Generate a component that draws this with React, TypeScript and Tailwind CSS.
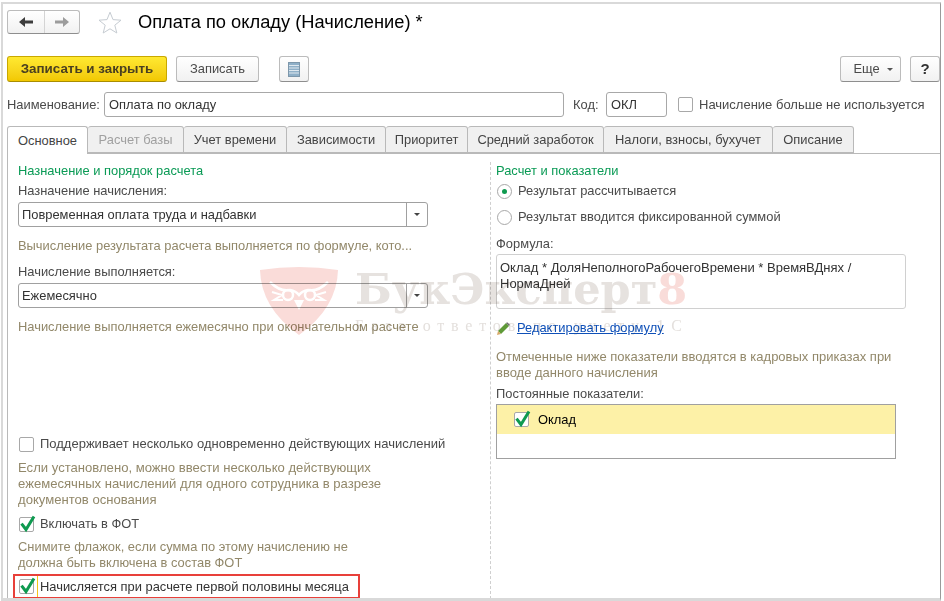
const font = { fontFamily: '"Liberation Sans", Arial, sans-serif' }

function Check({ checked = false }: { checked?: boolean }) {
  return (
    <span className="relative block w-[15px] h-[15px] shrink-0 rounded-[2px] border border-[#a8a8a8] bg-white">
      {checked && (
        <svg className="absolute left-[0px] top-[-3px] overflow-visible" width="15" height="17" viewBox="0 0 15 17">
          <path d="M1.5 8.6 L6 14.5 L14 1.5" fill="none" stroke="#0f9a50" strokeWidth="3" />
        </svg>
      )}
    </span>
  )
}

function Radio({ checked = false }: { checked?: boolean }) {
  return (
    <span className="flex items-center justify-center w-[15px] h-[15px] shrink-0 rounded-full border border-[#a8a8a8] bg-white">
      {checked && <span className="block w-[5px] h-[5px] rounded-full bg-[#0f9a50]" />}
    </span>
  )
}

function Btn({ children, className }: { children: React.ReactNode; className: string }) {
  return (
    <div className={"flex items-center justify-center h-[26px] rounded-[3px] border border-[#bcbcbc] border-b-[#8e8e8e] bg-linear-to-b from-white to-[#f1f1f1] text-[#4a4a4a] " + className}>
      {children}
    </div>
  )
}

function Select({ value }: { value: string }) {
  return (
    <div className="flex w-[410px] h-[25px] rounded-[3px] border border-[#a0a0a0] bg-white">
      <div className="flex-1 pl-[3px] leading-[23px] text-[#333]">{value}</div>
      <div className="flex items-center justify-center w-[21px] border-l border-[#a0a0a0]">
        <span className="block border-x-[3px] border-t-[3px] border-x-transparent border-t-[#444]" />
      </div>
    </div>
  )
}

const tabs = [
  { label: "Расчет базы", w: "w-[96px]", muted: true },
  { label: "Учет времени", w: "w-[103px]" },
  { label: "Зависимости", w: "w-[99px]" },
  { label: "Приоритет", w: "w-[82px]" },
  { label: "Средний заработок", w: "w-[136px]" },
  { label: "Налоги, взносы, бухучет", w: "w-[169px]" },
  { label: "Описание", w: "w-[81px]" },
]

export default function App() {
  return (
    <div className="relative w-[944px] h-[601px] overflow-hidden bg-white pt-[2px] pl-[1px] text-[12.9px] leading-[16px]" style={font}>
      <div className="w-[940px] h-[599px] border-t-2 border-l-2 border-r border-b-[3px] border-t-[#d9d9d9] border-l-[#d9d9d9] border-r-[#9a9a9a] border-b-[#d9d9d9] pl-[4px] overflow-hidden">
        {/* Title row */}
        <div className="flex items-center h-[24px] mt-[6px]">
          <div className="flex w-[73px] h-[24px] rounded-[3px] border border-[#bcbcbc] border-b-[#8e8e8e] bg-linear-to-b from-white to-[#f1f1f1]">
            <div className="flex items-center justify-center w-[37px] border-r border-[#d4d4d4]">
              <svg width="14" height="10" viewBox="0 0 14 10"><path d="M0 5 L6 0 V3.5 H14 V6.5 H6 V10 Z" fill="#3c3c3c" /></svg>
            </div>
            <div className="flex items-center justify-center flex-1">
              <svg width="14" height="10" viewBox="0 0 14 10"><path d="M14 5 L8 0 V3.5 H0 V6.5 H8 V10 Z" fill="#9c9c9c" /></svg>
            </div>
          </div>
          <svg className="ml-[18px]" width="24" height="23" viewBox="0 0 24 23">
            <path d="M12 1.2 L15 8.6 L23 9.2 L16.8 14.2 L18.8 22 L12 17.8 L5.2 22 L7.2 14.2 L1 9.2 L9 8.6 Z" fill="#fff" stroke="#c6ccd2" strokeWidth="1" />
          </svg>
          <div className="ml-[16px] text-[18.3px] text-black leading-[24px] -mt-[1px]">Оплата по окладу (Начисление) *</div>
        </div>

        {/* Command bar */}
        <div className="flex items-center h-[26px] mt-[22px]">
          <div className="flex items-center justify-center w-[160px] h-[26px] rounded-[3px] border border-[#c9a800] border-b-[#a98d00] bg-linear-to-b from-[#ffe930] to-[#f2c800] font-bold text-[13.4px] text-[#4a4020]">Записать и закрыть</div>
          <Btn className="w-[83px] ml-[9px]">Записать</Btn>
          <Btn className="w-[30px] ml-[20px]">
            <svg width="12" height="15" viewBox="0 0 12 15">
              <rect x="0.5" y="0.5" width="11" height="14" fill="#8fb0c8" stroke="#7d97ab" />
              <path d="M1 3.5 H11 M1 6 H11 M1 8.5 H11 M1 11 H11" stroke="#dfe8ef" strokeWidth="1" />
            </svg>
          </Btn>
          <div className="flex-1" />
          <Btn className="w-[61px] gap-[7px] pl-[5px]">
            <span>Еще</span>
            <span className="block border-x-[3px] border-t-[3px] border-x-transparent border-t-[#555]" />
          </Btn>
          <Btn className="w-[30px] ml-[9px] font-bold text-[15px] text-[#333]">?</Btn>
        </div>

        {/* Name row */}
        <div className="flex items-center h-[25px] mt-[10px] text-[#4a4a4a]">
          <span className="w-[97px]">Наименование:</span>
          <div className="w-[460px] h-[25px] rounded-[3px] border border-[#a8a8a8] pl-[4px] leading-[23px] text-[#333]">Оплата по окладу</div>
          <span className="ml-[9px] w-[33px]">Код:</span>
          <div className="w-[61px] h-[25px] rounded-[3px] border border-[#a8a8a8] pl-[4px] leading-[23px] text-[#333]">ОКЛ</div>
          <span className="ml-[11px]"><Check /></span>
          <span className="ml-[6px] text-[13px]">Начисление больше не используется</span>
        </div>

        {/* Tabs */}
        <div className="flex h-[28px] mt-[9px]">
          <div className="flex items-center justify-center w-[81px] h-[28px] rounded-t-[3px] border border-b-0 border-[#b9b9b9] bg-white text-[#444] z-10">Основное</div>
          {tabs.map((t) => (
            <div key={t.label} className={"flex items-center justify-center h-[27px] rounded-t-[3px] border border-l-0 border-[#b9b9b9] bg-[#f0f0f0] " + t.w + (t.muted ? " text-[#a0a0a0]" : " text-[#444]")}>
              {t.label}
            </div>
          ))}
        </div>

        {/* Panel */}
        <div className="flex -mt-[1px] h-[446px] border-t border-l border-[#b9b9b9]">
          {/* Left column */}
          <div className="w-[482px] pl-[10px] pt-[9px] text-[#4a4a4a]">
            <div className="text-[#0a9a55]">Назначение и порядок расчета</div>
            <div className="mt-[4px]">Назначение начисления:</div>
            <div className="mt-[3px]"><Select value="Повременная оплата труда и надбавки" /></div>
            <div className="mt-[11px] text-[#92886a]">Вычисление результата расчета выполняется по формуле, кото...</div>
            <div className="mt-[10px]">Начисление выполняется:</div>
            <div className="mt-[3px]"><Select value="Ежемесячно" /></div>
            <div className="mt-[11px] text-[#92886a]">Начисление выполняется ежемесячно при окончательном расчете</div>

            <div className="flex items-center gap-[6px] mt-[101px] pl-[1px] text-[13px]"><Check />Поддерживает несколько одновременно действующих начислений</div>
            <div className="mt-[8px] text-[13.1px] text-[#92886a]">
              Если установлено, можно ввести несколько действующих<br />
              ежемесячных начислений для одного сотрудника в разрезе<br />
              документов основания
            </div>
            <div className="flex items-center gap-[6px] mt-[8px] pl-[1px]"><Check checked />Включать в ФОТ</div>
            <div className="mt-[7px] text-[#92886a]">
              Снимите флажок, если сумма по этому начислению не<br />
              должна быть включена в состав ФОТ
            </div>
            <div className="flex items-center gap-[2px] w-[347px] h-[25px] mt-[3px] -ml-[5px] pl-[1px] border-[2px] border-[#e8403a] text-[#333]">
              <span className="flex items-center h-full pl-[3px] pr-[3px] border-r border-[#f5c518]"><Check checked /></span>
              Начисляется при расчете первой половины месяца
            </div>
          </div>

          {/* Right column */}
          <div className="flex-1 border-l border-dashed border-[#cfcfcf] mt-[8px] pl-[5px] pt-[1px] text-[#4a4a4a]">
            <div className="text-[#0a9a55]">Расчет и показатели</div>
            <div className="flex items-center gap-[6px] mt-[4px] pl-[1px]"><Radio checked />Результат рассчитывается</div>
            <div className="flex items-center gap-[6px] mt-[10px] pl-[1px]"><Radio />Результат вводится фиксированной суммой</div>
            <div className="mt-[11px]">Формула:</div>
            <div className="w-[410px] h-[55px] mt-[2px] rounded-[3px] border border-[#d0d0d0] pl-[3px] pt-[5px] text-[13px] text-[#333]">
              Оклад * ДоляНеполногоРабочегоВремени * ВремяВДнях /<br />НормаДней
            </div>
            <div className="flex items-center gap-[7px] mt-[11px] pl-[1px]">
              <svg width="13" height="13" viewBox="0 0 13 13">
                <path d="M1 9 L9 1 L12 4 L4 12 Z" fill="#5f9a38" />
                <path d="M9 1 L10.2 0.2 L12.8 2.8 L12 4 Z" fill="#6c6c6c" />
                <path d="M1 9 L0 13 L4 12 Z" fill="#d8a868" />
              </svg>
              <span className="text-[#0f50b8] underline">Редактировать формулу</span>
            </div>
            <div className="mt-[13px] text-[13px] text-[#92886a]">
              Отмеченные ниже показатели вводятся в кадровых приказах при<br />
              вводе данного начисления
            </div>
            <div className="mt-[5px]">Постоянные показатели:</div>
            <div className="w-[400px] h-[55px] mt-[2px] border border-[#a0a0a0]">
              <div className="flex items-center gap-[9px] h-[29px] pl-[17px] bg-[#fdf1a7] text-black"><Check checked />Оклад</div>
            </div>
          </div>
        </div>
      </div>

      {/* Watermark */}
      <div className="absolute left-[260px] top-[266px] flex pointer-events-none mix-blend-multiply">
        <svg width="78" height="70" viewBox="0 0 78 70">
          <path d="M0 4 Q39 -2 78 4 Q77 42 39 69 Q1 42 0 4 Z" fill="#fadcd9" />
          <path d="M10 16 Q20 26 30 24 Q36 25 39 29 Q42 25 48 24 Q58 26 68 16" fill="none" stroke="#fff" strokeWidth="2.5" />
          <circle cx="28" cy="29" r="5" fill="none" stroke="#fff" strokeWidth="2.5" />
          <circle cx="50" cy="29" r="5" fill="none" stroke="#fff" strokeWidth="2.5" />
          <path d="M12 26 L22 29 L14 34 L23 34 M66 26 L56 29 L64 34 L55 34" fill="none" stroke="#fff" strokeWidth="2" />
          <path d="M34 34 L39 44 L44 34 Z" fill="#fff" />
        </svg>
        <div className="ml-[17px] w-[340px]">
          <div className="text-[43px] leading-[46px] font-bold text-[#e6e2df] whitespace-nowrap" style={{ fontFamily: '"DejaVu Serif", serif' }}>
            БукЭксперт<span className="text-[#f9dcd9]">8</span>
          </div>
          <div className="mt-[5px] text-[16px] leading-[18px] text-[#e4e0dd] tracking-[6.8px] whitespace-nowrap" style={{ fontFamily: '"Liberation Serif", serif' }}>База ответов по учету 1С</div>
        </div>
      </div>
    </div>
  )
}
